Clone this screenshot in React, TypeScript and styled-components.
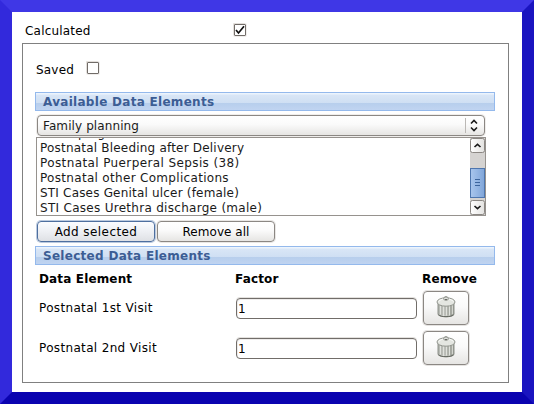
import React from "react";
import styled, { createGlobalStyle } from "styled-components";

const Global = createGlobalStyle`
  * { box-sizing: border-box; }
  body { margin: 0; background: #fff; font-family: "DejaVu Sans", sans-serif; font-size: 12px; color: #000; }
`;
const Frame = styled.main`
  width: 534px; height: 404px; padding: 0 13px 0 10px; overflow: hidden;
  border: 12px solid; border-color: #3f37e6 #1a14c0 #0a03b0 #3229dc;
`;
const Label = styled.span<{ $w: number; $line?: number }>`
  width: ${p => p.$w}px; flex: none; white-space: nowrap; line-height: ${p => p.$line ?? 16}px; letter-spacing: 0.2px;
`;
const Calculated = styled.div`
  display: flex; height: 31px; padding: 11px 0 0 3px; align-items: flex-start;
`;
const Check = styled.span`
  width: 12px; height: 12px; flex: none; border: 1px solid #716c68; border-radius: 1px;
  box-shadow: -1px -1px 0 #e3dfdb, 0 0 0 1px #f0eeec; background: #fff; display: block; margin-top: 1px;
  svg { display: block; }
`;
const Panel = styled.section`
  width: 487px; height: 340px; border: 1px solid #808080; padding: 17px 12px 0;
`;
const Saved = styled.div`
  display: flex; height: 31px; padding-left: 1px; align-items: flex-start;
`;
const Bar = styled.h2`
  margin: 0; width: 460px; height: 19px; padding-left: 7px; border: 1px solid #94b9ec;
  background: linear-gradient(#ecf4fd 0 1px, #d9e6f6 2px, #cfdff3 10px, #b7ceec 10px, #c0d4f1 100%);
  color: #3c5d94; font-size: 12px; line-height: 18px; font-weight: bold; white-space: nowrap;
  letter-spacing: 0.29px;
`;
const surface = "linear-gradient(#ffffff, #fafafa 45%, #e6e5e3)";
const Select = styled.div`
  margin: 4px 0 0 2px; width: 448px; height: 21px; display: flex; align-items: center;
  border: 1px solid #8b8783; border-radius: 4px; background: ${surface}; padding-left: 5px;
  box-shadow: 0 0 0 1px #efedeb; letter-spacing: 0.1px; color: #1a1a1a;
  svg { margin-left: auto; }
`;
const ListBox = styled.div`
  margin: 1px 0 0 1px; width: 450px; height: 79px; display: flex; border: 1px solid #96928e;
  color: #1a1a1a; background: #fff;
`;
const Rows = styled.div`
  flex: 1; height: 77px; overflow: hidden; padding-left: 3px;
  display: flex; flex-direction: column; justify-content: flex-end;
`;
const Item = styled.div<{ $ls: number }>`
  height: 15px; line-height: 17px; flex: none; white-space: nowrap; letter-spacing: ${p => p.$ls}px;
`;
const Buttons = styled.div`
  display: flex; gap: 2px; padding: 5px 0 4px 2px;
`;
const Button = styled.button<{ $focus?: boolean }>`
  width: 118px; height: 21px; padding: 0; font: inherit; color: #000;
  letter-spacing: ${p => (p.$focus ? 0.42 : 0.05)}px;
  border: 1px solid ${p => (p.$focus ? "#4e6f9f" : "#8b8783")}; border-radius: 4px;
  background: ${p => (p.$focus ? "linear-gradient(#fbfcff, #eff1f5 45%, #dfe1e5)" : surface)};
  box-shadow: 0 0 0 1px ${p => (p.$focus ? "#bccbe0" : "#e9e7e5")};
`;
const Table = styled.div`
  display: grid; grid-template-columns: 196px 187px 56px; grid-template-rows: 23px 40px 40px;
  padding: 2px 0 0 4px;
`;
const Head = styled.div`
  font-weight: bold; white-space: nowrap; line-height: 24px; letter-spacing: 0.15px;
`;
const Name = styled.div`
  line-height: 37px; white-space: nowrap; letter-spacing: 0.34px;
`;
const Field = styled.div`
  width: 181px; height: 21px; margin: 8px 0 0 1px; padding-left: 1px; line-height: 20px;
  border: 1px solid #716d69; border-radius: 4px; box-shadow: 0 -1px 0 #e3e1de, inset 1px 1px 0 #eeeceb;
`;
const Trash = styled.button`
  display: grid; place-items: center; width: 46px; height: 34px; margin: 1px 0 0 1px; padding: 0 0 4px;
  border: 1px solid #8b8783; border-radius: 4px; background: ${surface}; box-shadow: 0 0 0 1px #e5e3e1;
`;

const Can = () => (
  <svg width="20" height="24" viewBox="0 0 20 24" fill="none">
    <defs>
      <linearGradient id="body"><stop stopColor="#a9aca6" /><stop offset=".35" stopColor="#dcdeda" /><stop offset="1" stopColor="#969a92" /></linearGradient>
    </defs>
    <path d="M2 8V20.500C4 23.500 16 23.500 18 20.500V8Z" fill="url(#body)" stroke="#8e918a" />
    <path d="M2.500 20.800C5 23.300 15 23.300 17.500 20.800" stroke="#62655e" />
    <path d="M4.500 12V20.500M7.500 12V21.500M10.500 12V21.500M13.500 12V21.500M16.300 11V20" stroke="#e0e2dd" />
    <path d="M6 12V21M9 12V21.500M12 12V21.500M15 11.500V21" stroke="#979b93" strokeWidth=".8" />
    <ellipse cx="10" cy="8" rx="9" ry="4.200" fill="#e4e6e1" stroke="#92958e" />
    <path d="M2.500 7.500C4 5.500 8 4.800 10 4.800S16 5.500 17.500 7.500" stroke="#fafbf9" />
    <path d="M7.500 5.500C7.500 1.500 12.500 1.500 12.500 5.500" stroke="#92958e" />
    <path d="M8.500 5.700h3" stroke="#666962" strokeWidth="1.500" />
  </svg>
);

const Scroll = () => (
  <svg width="15" height="77" viewBox="0 0 15 77">
    <defs>
      <linearGradient id="cap"><stop stopColor="#fff" /><stop offset="1" stopColor="#e3e2e0" /></linearGradient>
      <linearGradient id="thumb"><stop stopColor="#a9c6ed" /><stop offset="1" stopColor="#7fa5d9" /></linearGradient>
    </defs>
    <path d="M0 0h15v77H0z" fill="#d5d3d1" />
    <rect x=".5" y=".5" width="14" height="14" rx="2" fill="url(#cap)" stroke="#8b8783" />
    <rect x=".5" y="62.5" width="14" height="14" rx="2" fill="url(#cap)" stroke="#8b8783" />
    <rect x=".5" y="30.5" width="14" height="29" fill="url(#thumb)" stroke="#4e76ae" />
    <path d="M5 41.5h5M5 44.5h5M5 47.5h5" stroke="#3d659d" />
    <path d="M4.500 9l3-2.700 3 2.700M4.500 68l3 2.700 3-2.700" fill="none" stroke="#1a1a1a" strokeWidth="1.600" />
  </svg>
);

const items: [string, number][] = [
  ["Other pregnant", 0],
  ["Postnatal Bleeding after Delivery", 0.2],
  ["Postnatal Puerperal Sepsis (38)", 0.39],
  ["Postnatal other Complications", 0.31],
  ["STI Cases Genital ulcer (female)", 0.19],
  ["STI Cases Urethra discharge (male)", 0.29],
];

export default function App() {
  return (
    <>
      <Global />
      <Frame>
        <Calculated>
          <Label $w={209}>Calculated</Label>
          <Check><svg width="10" height="10" viewBox="0 0 10 10"><path d="M1 5L3.500 8L9 1.300" fill="none" stroke="#111" strokeWidth="1.700" /></svg></Check>
        </Calculated>
        <Panel>
          <Saved><Label $w={51} $line={18}>Saved</Label><Check /></Saved>
          <Bar>Available Data Elements</Bar>
          <Select>
            Family planning
            <svg width="19" height="19" viewBox="0 0 19 19" fill="none">
              <path d="M.5 2v15" stroke="#bbb8b5" />
              <path d="M6 7.500L9 4.500l3 3M6 11.500L9 14.500l3-3" stroke="#1a1a1a" strokeWidth="1.600" />
            </svg>
          </Select>
          <ListBox>
            <Rows>{items.map(([t, ls]) => <Item key={t} $ls={ls}>{t}</Item>)}</Rows>
            <Scroll />
          </ListBox>
          <Buttons><Button $focus>Add selected</Button><Button>Remove all</Button></Buttons>
          <Bar>Selected Data Elements</Bar>
          <Table>
            <Head>Data Element</Head><Head>Factor</Head><Head>Remove</Head>
            {["Postnatal 1st Visit", "Postnatal 2nd Visit"].map(t => (
              <React.Fragment key={t}><Name>{t}</Name><Field>1</Field><Trash aria-label="Remove"><Can /></Trash></React.Fragment>
            ))}
          </Table>
        </Panel>
      </Frame>
    </>
  );
}
